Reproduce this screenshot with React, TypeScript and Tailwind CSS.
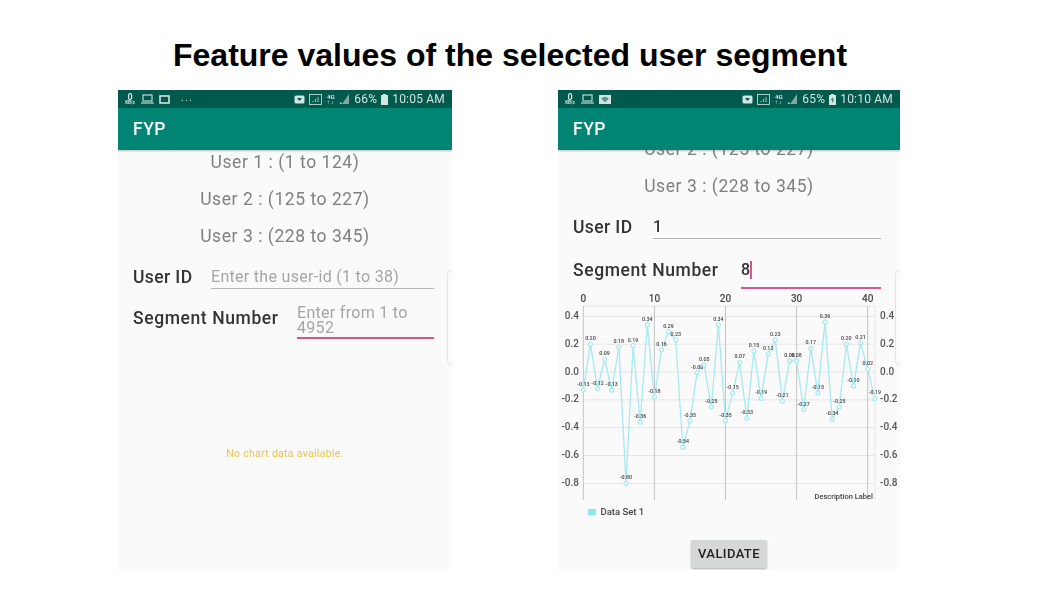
import type { ReactNode } from 'react'

const values = [
  -0.13, 0.2, -0.12, 0.09, -0.13, 0.18, -0.8, 0.19, -0.36, 0.34, -0.18, 0.16, 0.29, 0.23, -0.54, -0.35, -0.004, 0.05,
  -0.25, 0.34, -0.35, -0.15, 0.07, -0.33, 0.15, -0.19, 0.13, 0.23, -0.21, 0.08, 0.08, -0.27, 0.17, -0.15, 0.36, -0.34,
  -0.25, 0.2, -0.1, 0.21, 0.02, -0.19,
]

const px = (i: number) => 25.3 + i * 7.11
const py = (v: number) => 81 - v * 139.2

function StatusBar({ left, right, percent, time }: { left: ReactNode; right: boolean; percent: string; time: string }) {
  return (
    <div className="h-[18px] bg-[#00594d] flex items-center justify-between pl-[6px] pr-[7px] text-[#d4e4e0]">
      <div className="flex items-center gap-[5px]">{left}</div>
      <div className="flex items-center gap-[4px] font-['Roboto',sans-serif] text-[12px] leading-none tracking-[0.2px]">
        <svg width="11" height="9" viewBox="0 0 11 9">
          <rect x="0.5" y="0.5" width="10" height="8" rx="1.5" fill="#d4e4e0" />
          <path d="M3 3h5L5.5 6z" fill="#00594d" />
        </svg>
        <svg width="13" height="11" viewBox="0 0 13 11" fill="none" stroke="#d4e4e0" strokeWidth="0.8">
          <rect x="0.5" y="0.5" width="12" height="10" />
          <path d="M4 8V7M6.5 8V5M9 8V3" />
        </svg>
        <span className="w-[9px] flex flex-col items-center text-[6px] leading-[5px] font-bold">
          <span>4G</span>
          <span className="tracking-[1px]">↑↓</span>
        </span>
        <svg width="11" height="10" viewBox="0 0 11 10">
          <path d="M10 0v10H3z" fill="#7fa8a0" />
          <path d="M1 8.500h1.500V10H1z" fill="#d4e4e0" />
        </svg>
        <span>{percent}</span>
        <svg width="9" height="11" viewBox="0 0 9 11" className="-mx-[1px]">
          <path d="M3 0h3v1h2v10H1V1h2z" fill="#d4e4e0" />
          {right && <path d="M5 3 3 6h1.500L4 9l2-3.500H4.500z" fill="#00594d" />}
        </svg>
        <span>{time}</span>
      </div>
    </div>
  )
}

function KbIcon() {
  return (
    <span className="w-[12px] flex flex-col items-center font-['Roboto',sans-serif] text-[#d4e4e0] font-bold">
      <span className="text-[9px] leading-[8px]">0</span>
      <span className="text-[4.500px] leading-[4px]">KB/s</span>
    </span>
  )
}

function LaptopIcon() {
  return (
    <svg width="13" height="10" viewBox="0 0 13 10" fill="none" stroke="#d4e4e0" strokeWidth="1.1">
      <rect x="2" y="1" width="9" height="6" />
      <path d="M0 9h13" />
    </svg>
  )
}

function AppBar() {
  return (
    <div className="relative h-[42px] bg-[#008474] flex items-center pl-[15px] pt-[1px] shadow-[0_1px_2px_rgba(0,0,0,0.25)]">
      <span className="font-['Roboto',sans-serif] font-medium text-[17.5px] tracking-[0.5px] text-white">FYP</span>
    </div>
  )
}

function RangeLine({ children }: { children: ReactNode }) {
  return <div className="h-[24px] leading-[24px] text-[17.500px] tracking-[0.55px] text-[#808080]">{children}</div>
}

function SideCard() {
  return (
    <div className="absolute right-0 top-[180px] w-[5px] h-[95px] rounded-l-[6px] border border-r-0 border-[#e4e4e4] bg-[#fafafa]" />
  )
}

function Chart() {
  const points = values.map((v, i) => `${px(i).toFixed(1)},${py(v).toFixed(1)}`).join(' ')
  const grid = [0.4, 0.2, 0, -0.2, -0.4, -0.6, -0.8]
  return (
    <svg width="342" height="232" viewBox="0 0 342 232" className="block font-['Roboto',sans-serif]">
      {grid.map((g) => (
        <line key={g} x1="25" x2="317" y1={py(g)} y2={py(g)} stroke="#e6e6e6" strokeWidth="1" />
      ))}
      <line x1="25" x2="317" y1="15" y2="15" stroke="#e4e4e4" />
      <line x1="317" x2="317" y1="15" y2="209" stroke="#e4e4e4" />
      {[0, 10, 20, 30, 40].map((t) => (
        <g key={t}>
          <line x1={px(t)} x2={px(t)} y1="15" y2="209" stroke="#c4c4c4" strokeWidth="1" />
          <text x={px(t)} y="11" textAnchor="middle" fontSize="10" fontWeight="500" fill="#444">
            {t}
          </text>
        </g>
      ))}
      {grid.map((g) => (
        <g key={g} fontSize="10" fontWeight="500" fill="#555">
          <text x="21" y={py(g) + 2.5} textAnchor="end">
            {g.toFixed(1)}
          </text>
          <text x="322" y={py(g) + 2.5}>
            {g.toFixed(1)}
          </text>
        </g>
      ))}
      <polyline points={points} fill="none" stroke="#a5e9f2" strokeWidth="1.300" />
      {values.map((v, i) => (
        <g key={i}>
          <circle cx={px(i)} cy={py(v)} r="2" fill="#fafafa" stroke="#a5e9f2" strokeWidth="1.100" />
          <text x={px(i)} y={py(v) - 4} textAnchor="middle" fontSize="5.300" fontWeight="500" fill="#444">
            {v.toFixed(2)}
          </text>
        </g>
      ))}
      <text x="315" y="208" textAnchor="end" fontSize="7.500" fontWeight="500" fill="#444">
        Description Label
      </text>
      <rect x="30" y="218" width="8" height="6.500" fill="#8ee6f7" />
      <text x="42.500" y="224" fontSize="9.500" fontWeight="500" fill="#444">
        Data Set 1
      </text>
    </svg>
  )
}

export default function App() {
  return (
    <div className="w-[1057px] h-[595px] bg-white overflow-hidden">
      <div className="h-[90px] pt-[20px] pl-[173px] flex items-center">
        <h1 className="font-['Liberation_Sans',Arial,sans-serif] font-bold text-[32px] text-black whitespace-nowrap">
          Feature values of the selected user segment
        </h1>
      </div>
      <div className="flex pl-[118px] gap-[106px] font-['Roboto',sans-serif] blur-[0.5px]">
        {/* Left: before a segment is entered */}
        <div className="relative w-[334px] h-[480px] bg-[#fafafa] overflow-hidden">
          <StatusBar
            left={
              <>
                <KbIcon />
                <LaptopIcon />
                <svg width="11" height="9" viewBox="0 0 11 9" fill="none" stroke="#d4e4e0" strokeWidth="1.600">
                  <rect x="1" y="1" width="9" height="7" />
                </svg>
                <span className="ml-[6px] text-[10px] leading-none tracking-[1.500px] -mt-[3px]">...</span>
              </>
            }
            right={false}
            percent="66%"
            time="10:05 AM"
          />
          <AppBar />
          <div className="flex flex-col items-center gap-[13px]">
            <RangeLine>User 1 : (1 to 124)</RangeLine>
            <RangeLine>User 2 : (125 to 227)</RangeLine>
            <RangeLine>User 3 : (228 to 345)</RangeLine>
          </div>
          <div className="mt-[17px] ml-[15px] mr-[18px] h-[24px] flex items-start">
            <span className="w-[78px] text-[17.500px] font-medium leading-[24px] tracking-[0.4px] text-[#333]">User ID</span>
            <span className="flex-1 h-[24px] border-b border-[#b4b4b4] text-[16px] leading-[24px] tracking-[0.3px] text-[#a5a5a5]">
              Enter the user-id (1 to 38)
            </span>
          </div>
          <div className="mt-[16px] ml-[15px] mr-[18px] h-[34px] flex items-start">
            <span className="w-[164px] mt-[1px] text-[17.500px] font-medium leading-[24px] tracking-[0.6px] text-[#333] whitespace-nowrap">
              Segment Number
            </span>
            <span className="flex-1 h-[34px] border-b-2 border-[#d6578c] text-[16px] leading-[15px] tracking-[0.3px] text-[#a5a5a5]">
              Enter from 1 to
              <br />
              4952
            </span>
          </div>
          <div className="mt-[107px] text-center text-[10.500px] leading-[16px] tracking-[0.3px] text-[#f0c24a]">
            No chart data available.
          </div>
          <SideCard />
        </div>

        {/* Right: chart for user 1, segment 8 */}
        <div className="relative w-[342px] h-[480px] bg-[#fafafa] overflow-hidden flex flex-col">
          <StatusBar
            left={
              <>
                <KbIcon />
                <LaptopIcon />
                <svg width="12" height="9" viewBox="0 0 12 9">
                  <rect x="0" y="0" width="12" height="9" fill="#d4e4e0" />
                  <path d="M2 3.500Q6 0 10 3.500L6 7.500z" fill="#5d9a8e" />
                </svg>
              </>
            }
            right
            percent="65%"
            time="10:10 AM"
          />
          <div className="relative z-10">
            <AppBar />
          </div>
          <div className="flex-1 overflow-hidden">
            <div className="-mt-[13px] flex flex-col items-center gap-[13px]">
              <RangeLine>User 2 : (125 to 227)</RangeLine>
              <RangeLine>User 3 : (228 to 345)</RangeLine>
            </div>
            <div className="mt-[17px] ml-[15px] mr-[19px] h-[24px] flex items-start">
              <span className="w-[80px] text-[17.500px] font-medium leading-[24px] tracking-[0.4px] text-[#333]">User ID</span>
              <span className="flex-1 h-[24px] border-b border-[#b4b4b4] text-[16px] font-medium leading-[24px] text-[#333]">1</span>
            </div>
            <div className="ml-[15px] mr-[19px] h-[50px] flex items-start">
              <span className="w-[168px] mt-[19px] text-[17.500px] font-medium leading-[24px] tracking-[0.6px] text-[#333] whitespace-nowrap">
                Segment Number
              </span>
              <span className="flex-1 h-[50px] pt-[22px] border-b-2 border-[#d6578c]">
                <span className="flex items-center h-[18px] text-[16px] font-medium text-[#333]">
                  8<span className="w-[2px] h-[18px] bg-[#d6578c]" />
                </span>
              </span>
            </div>
            <div className="mt-[2px]">
              <Chart />
            </div>
            <div className="mt-[17px] flex justify-center">
              <button className="w-[76px] h-[28px] rounded-[2px] bg-[#d6d7d7] shadow-[0_1px_2px_rgba(0,0,0,0.3)] text-[13px] font-medium tracking-[0.4px] text-[#222]">
                VALIDATE
              </button>
            </div>
          </div>
          <SideCard />
        </div>
      </div>
    </div>
  )
}
